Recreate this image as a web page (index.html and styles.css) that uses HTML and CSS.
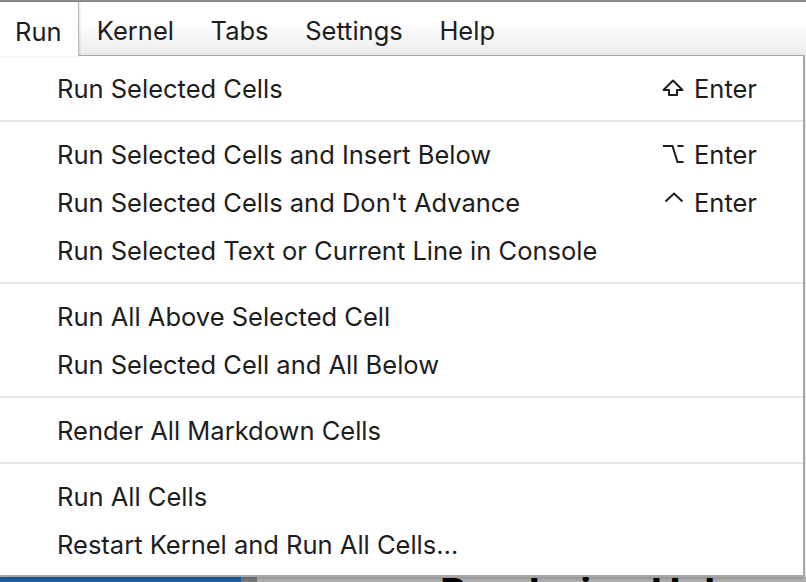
FILE: index.html
```html
<!DOCTYPE html>
<html>
<head>
<meta charset="utf-8">
<link rel="stylesheet" href="styles.css">
</head>
<body>
<div class="page">
  <div class="topline"></div>
  <div class="menubar">
    <div class="mb-item active">Run</div>
    <div class="mb-item">Kernel</div>
    <div class="mb-item">Tabs</div>
    <div class="mb-item">Settings</div>
    <div class="mb-item">Help</div>
  </div>
  <div class="menu">
    <div class="row"><span class="label">Run Selected Cells</span><span class="key"><span class="ico-box"><svg class="ico" viewBox="0 0 22 20"><path d="M11 2.5 L20.5 12 H15 V17 H7 V12 H1.5 Z" fill="none" stroke="#1d1d1d" stroke-width="2" stroke-linejoin="round"/></svg></span>Enter</span></div>
    <div class="sep"></div>
    <div class="row"><span class="label">Run Selected Cells and Insert Below</span><span class="key"><span class="ico-box"><svg class="ico" viewBox="0 0 22 20"><path d="M1 2 H10.5 L15.5 18 H21.5 M15.5 2 H21.5" fill="none" stroke="#1d1d1d" stroke-width="2"/></svg></span>Enter</span></div>
    <div class="row"><span class="label">Run Selected Cells and Don't Advance</span><span class="key"><span class="ico-box"><svg class="ico" viewBox="0 0 22 20"><path d="M3.5 9.5 L12 1.5 L20.5 9.5" fill="none" stroke="#1d1d1d" stroke-width="2"/></svg></span>Enter</span></div>
    <div class="row"><span class="label">Run Selected Text or Current Line in Console</span></div>
    <div class="sep"></div>
    <div class="row"><span class="label">Run All Above Selected Cell</span></div>
    <div class="row"><span class="label">Run Selected Cell and All Below</span></div>
    <div class="sep"></div>
    <div class="row"><span class="label">Render All Markdown Cells</span></div>
    <div class="sep"></div>
    <div class="row"><span class="label">Run All Cells</span></div>
    <div class="row"><span class="label">Restart Kernel and Run All Cells…</span></div>
  </div>
  <div class="bottom">
    <div class="b-blue"></div>
    <div class="b-dark"></div>
    <div class="b-rest"><span class="peek">Rendering Hel</span></div>
  </div>
</div>
</body>
</html>
```

FILE: styles.css
```css
html, body {
  margin: 0;
  padding: 0;
  background: #ffffff;
  overflow: hidden;
}
.page {
  width: 806px;
  height: 582px;
  display: flex;
  flex-direction: column;
  font-family: Inter, "Open Sans", "Liberation Sans", sans-serif;
  color: #1d1d1d;
  overflow: hidden;
}
.topline {
  height: 2px;
  background: #8a8a8a;
  flex: none;
}
.menubar {
  height: 53px;
  flex: none;
  display: flex;
  align-items: stretch;
  background: linear-gradient(#ffffff 40%, #ececec);
  font-size: 25.5px;
}
.mb-item {
  display: flex;
  align-items: center;
  padding: 4px 18.3px 0 18.3px;
}
.mb-item.active {
  padding-left: 15px;
  padding-right: 16px;
  background: #ffffff;
  border-right: 1px solid #b8b8b8;
  box-shadow: 1px 0 2px rgba(0,0,0,0.12);
  position: relative;
  z-index: 2;
  margin-bottom: -1px;
}
.menu {
  height: 522px;
  box-sizing: border-box;
  flex: none;
  width: 805px;
  border-top: 1px solid #a8a8a8;
  border-right: 2px solid #a8a8a8;
  border-bottom: 2px solid #a8a8a8;
  background: #ffffff;
  padding: 8px 0 0 0;
  display: flex;
  flex-direction: column;
  font-size: 25.5px;
  box-shadow: 0 2px 4px rgba(0,0,0,0.2);
  position: relative;
  z-index: 1;
}
.row {
  height: 48px;
  flex: none;
  display: flex;
  align-items: center;
  justify-content: space-between;
  padding: 0 46px 0 57px;
}
.key {
  display: flex;
  align-items: center;
  width: 95px;
}
.ico-box {
  width: 32px;
  flex: none;
  display: flex;
  align-items: center;
}
.ico {
  display: block;
  width: 22px;
  height: 20px;
  flex: none;
}
.sep {
  height: 18px;
  flex: none;
  display: flex;
  align-items: center;
}
.sep::after {
  content: "";
  display: block;
  width: 100%;
  height: 2px;
  background: #e6e6e6;
}
.bottom {
  flex: 1;
  display: flex;
  min-height: 0;
}
.b-blue {
  width: 241px;
  background: #1f5ea8;
}
.b-dark {
  width: 16px;
  background: #7a7a7a;
}
.b-rest {
  flex: 1;
  background: #b4b4b4;
  overflow: hidden;
  position: relative;
}
.peek {
  position: absolute;
  left: 183px;
  top: -4px;
  font-size: 40px;
  font-weight: 700;
  color: #000;
  line-height: 1;
}
```
